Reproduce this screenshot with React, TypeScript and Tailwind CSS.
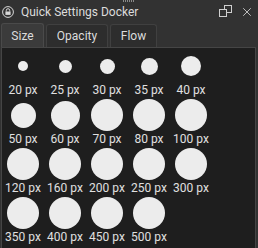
import { X } from "lucide-react";

const sizes = [20, 25, 30, 35, 40, 50, 60, 70, 80, 100, 120, 160, 200, 250, 300, 350, 400, 450, 500];

function dotSize(px: number) {
  // preview circles are scaled down and capped
  const map: Record<number, number> = { 20: 10, 25: 13, 30: 15, 35: 17, 40: 20, 50: 25, 60: 29, 70: 32 };
  return map[px] ?? 32;
}

function LockIcon() {
  return (
    <svg width="12" height="12" viewBox="0 0 12 12" fill="none" stroke="#d8d8d8" strokeWidth="1">
      <circle cx="6" cy="6" r="5.4" />
      <path d="M4.3 5.5V4.4a1.7 1.7 0 0 1 3.4 0v1.1" />
      <rect x="3.4" y="5.5" width="5.2" height="3.4" fill="#d8d8d8" stroke="none" />
    </svg>
  );
}

function FloatIcon() {
  return (
    <svg width="13" height="13" viewBox="0 0 13 13" fill="none" stroke="#d0d0d0" strokeWidth="1">
      <rect x="5.5" y="0.5" width="7" height="7" />
      <rect x="0.5" y="4.5" width="7" height="7" fill="#323232" />
    </svg>
  );
}

export default function App() {
  return (
    <div className="flex h-[248px] w-[258px] flex-col bg-[#323232] font-['Roboto',sans-serif] text-[#dcdcdc]">
      <div className="relative flex h-[23px] items-center pl-[2px] pr-[4px]">
        <div className="absolute left-[123px] top-0 h-[2px] w-[12px] bg-[repeating-linear-gradient(90deg,#8a8a8a_0_1px,transparent_1px_2px)]" />
        <LockIcon />
        <span className="ml-[7px] text-[12px] leading-none">Quick Settings Docker</span>
        <div className="ml-auto flex items-center gap-[8px]">
          <FloatIcon />
          <X size={14} strokeWidth={1.5} color="#d0d0d0" />
        </div>
      </div>

      <div className="flex h-[24px] items-end gap-[2px] pl-[1px]">
        <div className="flex h-[24px] w-[43px] items-center justify-center rounded-t-[3px] border border-b-0 border-[#4a4a4a] bg-[#3b3b3b] text-[12px]">
          Size
        </div>
        <div className="flex h-[23px] w-[62px] items-center justify-center rounded-t-[3px] border border-b-0 border-[#404040] bg-[#2d2d2d] text-[12px]">
          Opacity
        </div>
        <div className="flex h-[23px] w-[47px] items-center justify-center rounded-t-[3px] border border-b-0 border-[#404040] bg-[#2d2d2d] text-[12px]">
          Flow
        </div>
      </div>

      <div className="ml-[1px] mr-[2px] flex-1 border border-b-0 border-[#454545] bg-[#1e1e1e] pt-[1px]">
        <div className="grid grid-cols-[repeat(5,42px)]">
          {sizes.map((s) => (
            <div key={s} className="flex flex-col items-center">
              <div className="flex h-[34px] items-center justify-center">
                <div
                  className="rounded-full bg-[#ececec]"
                  style={{ width: dotSize(s), height: dotSize(s) }}
                />
              </div>
              <span className="text-[12px] leading-[15px] text-[#e0e0e0]">{s} px</span>
            </div>
          ))}
        </div>
      </div>
    </div>
  );
}
